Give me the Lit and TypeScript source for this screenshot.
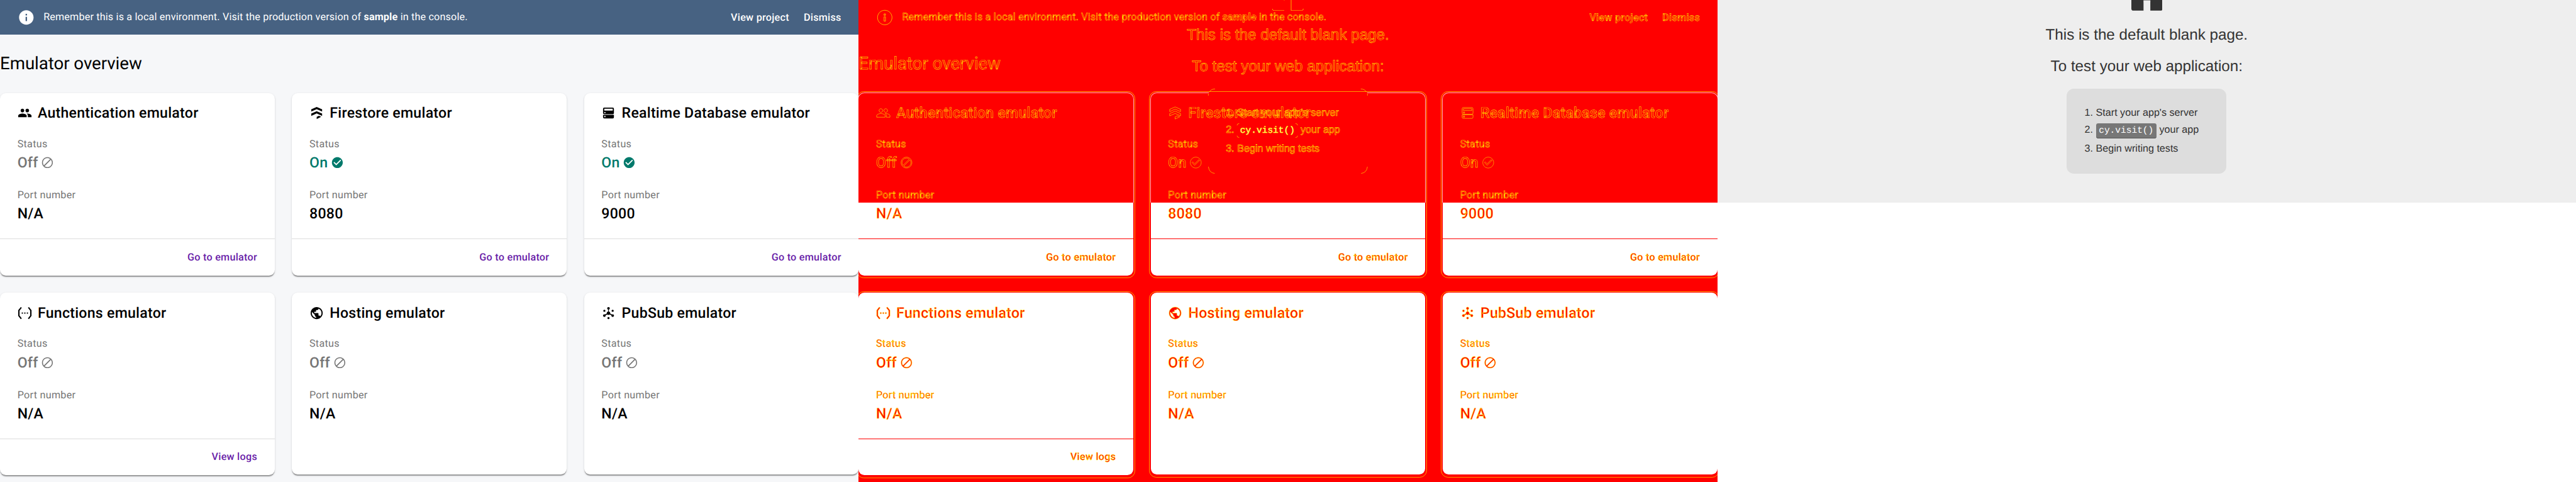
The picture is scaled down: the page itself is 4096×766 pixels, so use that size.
import { LitElement, html, css, svg, nothing } from "lit";
import { customElement, property } from "lit/decorators.js";
import { classMap } from "lit/directives/class-map.js";

const ICONS: Record<string, unknown> = {
  auth: svg`<path d="M16 11c1.66 0 2.99-1.34 2.99-3S17.66 5 16 5c-1.66 0-3 1.34-3 3s1.34 3 3 3zm-8 0c1.66 0 2.99-1.34 2.99-3S9.66 5 8 5C6.34 5 5 6.34 5 8s1.34 3 3 3zm0 2c-2.33 0-7 1.17-7 3.5V19h14v-2.5c0-2.33-4.67-3.5-7-3.5zm8 0c-.29 0-.62.02-.97.05 1.16.84 1.97 1.97 1.97 3.45V19h6v-2.5c0-2.33-4.67-3.5-7-3.5z"/>`,
  firestore: svg`<path d="M3 6l9-4 9 4v3.7l-9-4-9 4z"/><path d="M3 13l9-4 9 4v3.8l-9-4-9 4z"/><path d="M12 18.4l3.6-1.7 4 1.6L12 22z"/>`,
  database: svg`<path fill-rule="evenodd" d="M5 3h14a2 2 0 0 1 2 2v7.2a1.8 1.8 0 0 1-1.8 1.8H4.8A1.8 1.8 0 0 1 3 12.200V5a2 2 0 0 1 2-2zm0 2v3h14V5zm0 5.300v2h2v-2z"/><path fill-rule="evenodd" d="M3 15h18v4a2 2 0 0 1-2 2H5a2 2 0 0 1-2-2zm2 2v2h2v-2z"/>`,
  functions: svg`<path d="M5.200 2L7 3.200 3.200 8v8L7 20.800 5.200 22 1 16.700V7.300zM18.800 2L17 3.200 20.800 8v8L17 20.800l1.800 1.200L23 16.700V7.300z"/><circle cx="7.800" cy="12" r="1.200"/><circle cx="12" cy="12" r="1.200"/><circle cx="16.200" cy="12" r="1.200"/>`,
  hosting: svg`<path d="M12 2C6.48 2 2 6.48 2 12s4.48 10 10 10 10-4.48 10-10S17.52 2 12 2zm-1 17.93c-3.95-.49-7-3.85-7-7.93 0-.62.08-1.21.21-1.79L9 15v1c0 1.1.9 2 2 2v1.93zm6.9-2.54c-.26-.81-1-1.390-1.900-1.390h-1v-3c0-.55-.45-1-1-1H8v-2h2c.55 0 1-.45 1-1V7h2c1.100 0 2-.9 2-2v-.41c2.930 1.190 5 4.060 5 7.410 0 2.080-.8 3.970-2.100 5.390z"/>`,
  pubsub: svg`<path d="M11.500 4h1v7.500l7.200 3.900-.6 1.200L12 13.400l-7.100 3.200-.6-1.200 7.200-3.900z"/><circle cx="12" cy="4.200" r="2.200"/><circle cx="12" cy="12.200" r="2.800"/><circle cx="5.200" cy="16.200" r="2.200"/><circle cx="18.900" cy="16.200" r="2.200"/><circle cx="5.200" cy="8.200" r="1.800"/><circle cx="18.900" cy="8.200" r="1.800"/><circle cx="12" cy="20.200" r="1.800"/>`,
  off: svg`<path d="M12 2C6.48 2 2 6.48 2 12s4.48 10 10 10 10-4.48 10-10S17.52 2 12 2zM3.800 12c0-4.530 3.670-8.200 8.200-8.200 1.920 0 3.680.66 5.080 1.760L5.560 17.080A8.150 8.150 0 0 1 3.800 12zm8.200 8.200c-1.920 0-3.680-.66-5.080-1.760L18.440 6.920A8.150 8.150 0 0 1 20.200 12c0 4.530-3.670 8.200-8.200 8.200z"/>`,
  on: svg`<path d="M12 2C6.48 2 2 6.48 2 12s4.48 10 10 10 10-4.48 10-10S17.52 2 12 2zm-2 15l-5-5 1.410-1.410L10 14.170l7.590-7.590L19 8l-9 9z"/>`,
  info: svg`<path d="M12 2C6.48 2 2 6.48 2 12s4.48 10 10 10 10-4.48 10-10S17.52 2 12 2zm1 15h-2v-6h2v6zm0-8h-2V7h2v2z"/>`,
};

interface Emulator {
  icon: string;
  name: string;
  port?: string;
  action?: string;
}

const EMULATORS: Emulator[] = [
  { icon: "auth", name: "Authentication emulator", action: "Go to emulator" },
  { icon: "firestore", name: "Firestore emulator", port: "8080", action: "Go to emulator" },
  { icon: "database", name: "Realtime Database emulator", port: "9000", action: "Go to emulator" },
  { icon: "functions", name: "Functions emulator", action: "View logs" },
  { icon: "hosting", name: "Hosting emulator" },
  { icon: "pubsub", name: "PubSub emulator" },
];

const icon = (name: string, cls = "") =>
  html`<svg class="icon ${cls}" viewBox="0 0 24 24">${ICONS[name]}</svg>`;

/** The emulator overview page; `diff` paints it as a red/yellow change mask. */
@customElement("emulator-overview")
export class EmulatorOverview extends LitElement {
  @property({ type: Boolean, reflect: true }) diff = false;

  static styles = css`
    :host {
      display: flex;
      flex-direction: column;
      width: 1184px;
      height: 665px;
      background: #f6f7f9;
      color: #000;
      font-family: Roboto, sans-serif;
      letter-spacing: 0.25px;
      white-space: nowrap;
      text-rendering: geometricPrecision;
    }
    .icon {
      width: 20px;
      height: 20px;
      flex: none;
      fill: currentColor;
      overflow: visible;
    }
    .banner {
      display: flex;
      align-items: center;
      height: 48px;
      padding: 0 24px;
      background: #476282;
      color: #fff;
      font-size: 14px;
      line-height: 20px;
    }
    .icon.info {
      width: 24px;
      height: 24px;
      margin-right: 12px;
    }
    .message {
      flex: 1;
      margin-bottom: 2.200px;
      letter-spacing: 0.16px;
    }
    .message b {
      font-weight: 700;
    }
    .links {
      display: flex;
      gap: 20px;
      font-weight: 500;
    }
    h1 {
      margin: 0;
      padding: 24.300px 0 23.700px;
      font-size: 24px;
      line-height: 32px;
      font-weight: 400;
      letter-spacing: -0.04px;
    }
    .grid {
      display: grid;
      grid-template-columns: repeat(3, 1fr);
      grid-template-rows: 251.500px 251.500px;
      gap: 24px;
    }
    .card {
      position: relative;
      display: flex;
      flex-direction: column;
      border-radius: 8px;
      background: #fff;
      box-shadow: 0 2px 1px -1px rgba(0, 0, 0, 0.2), 0 1px 1px rgba(0, 0, 0, 0.14),
        0 1px 3px rgba(0, 0, 0, 0.12);
    }
    .card.plain {
      margin-bottom: 0.800px;
    }
    .body {
      flex: 1;
      padding: 16.100px 24px 0;
    }
    .title {
      display: flex;
      align-items: center;
      gap: 8px;
      margin-bottom: 19.800px;
      font-size: 20px;
      line-height: 24px;
      font-weight: 500;
    }
    .label {
      font-size: 14px;
      line-height: 20px;
      color: #757575;
    }
    .value {
      display: flex;
      align-items: center;
      gap: 4px;
      margin: 4.600px 0 21.800px;
      font-size: 20px;
      line-height: 24px;
      font-weight: 500;
    }
    .value .icon {
      width: 18px;
      height: 18px;
    }
    .value.off {
      color: #757575;
    }
    .value.on {
      color: #00796b;
    }
    .actions {
      display: flex;
      justify-content: flex-end;
      align-items: center;
      height: 52px;
      padding: 0 24px;
      border-top: 1px solid #dcdcdc;
      font-size: 14px;
      line-height: 20px;
      font-weight: 500;
      color: #681da8;
    }
    .actions span {
      margin-bottom: 0.800px;
    }

    :host([diff]) {
      background: #f00;
      color: #f00;
      -webkit-text-stroke: 0.400px #ff0;
    }
    :host([diff]) .icon {
      stroke: #ff0;
      stroke-width: 0.600px;
    }
    :host([diff]) .banner {
      background: none;
    }
    :host([diff]) .banner,
    :host([diff]) .label,
    :host([diff]) .value,
    :host([diff]) .actions {
      color: #f00;
    }
    :host([diff]) .card {
      box-shadow: none;
    }
    :host([diff]) .card.covered {
      background: linear-gradient(#f00 151.200px, #fff 151.200px);
    }
    :host([diff]) .actions {
      border-top-color: #f00;
    }
    .outline {
      position: absolute;
      inset: -2px -2.600px -3.700px;
      border: 1px solid rgba(255, 255, 0, 0.6);
      border-radius: 10px;
    }
    .edge {
      position: absolute;
      inset: -0.600px -1px auto;
      height: 151px;
      border: 1px solid rgba(255, 255, 255, 0.7);
      border-bottom: 0;
      border-radius: 9px 9px 0 0;
    }
  `;

  private card(e: Emulator, index: number) {
    const covered = index < 3;
    return html`<article class=${classMap({ card: true, plain: !e.action, covered })}>
      ${this.diff ? html`<i class="outline"></i>${covered ? html`<i class="edge"></i>` : nothing}` : nothing}
      <div class="body">
        <div class="title">${icon(e.icon)}<span>${e.name}</span></div>
        <div class="label">Status</div>
        <div class="value ${e.port ? "on" : "off"}">
          <span>${e.port ? "On" : "Off"}</span>${icon(e.port ? "on" : "off")}
        </div>
        <div class="label">Port number</div>
        <div class="value">${e.port ?? "N/A"}</div>
      </div>
      ${e.action ? html`<div class="actions"><span>${e.action}</span></div>` : nothing}
    </article>`;
  }

  render() {
    return html`
      <header class="banner">
        ${icon("info", "info")}
        <span class="message">Remember this is a local environment. Visit the production version of <b>sample</b> in the console.</span>
        <nav class="links"><span>View project</span><span>Dismiss</span></nav>
      </header>
      <h1>Emulator overview</h1>
      <main class="grid">${EMULATORS.map((e, i) => this.card(e, i))}</main>
    `;
  }
}

/** The test runner's default blank page; `diff` leaves only its outlines. */
@customElement("blank-page")
export class BlankPage extends LitElement {
  @property({ type: Boolean, reflect: true }) diff = false;

  static styles = css`
    :host {
      display: flex;
      flex-direction: column;
      align-items: center;
      width: 1184px;
      height: 279px;
      overflow: hidden;
      background: #eee;
      color: #333;
      font-family: "Liberation Sans", Arial, sans-serif;
      white-space: nowrap;
      text-rendering: geometricPrecision;
    }
    .logo {
      display: block;
      width: 43px;
      height: 15px;
      margin-bottom: 11.600px;
    }
    p {
      margin: 0;
      font-size: 21px;
      line-height: 44px;
    }
    .box {
      position: relative;
      box-sizing: border-box;
      width: 220px;
      height: 117px;
      margin-top: 7.400px;
      padding: 21.600px 0 0 24.300px;
      border-radius: 10px;
      background: #ddd;
      font-size: 14px;
      line-height: 24px;
    }
    .step {
      display: flex;
      height: 26px;
    }
    .step:first-child {
      height: 23.500px;
    }
    .num {
      width: 15.700px;
    }
    code {
      position: relative;
      padding: 3.500px 4px 2.500px;
      border-bottom: 1px solid #555;
      border-radius: 3px;
      background: #777;
      color: #fff;
      font-family: "Liberation Mono", monospace;
      font-size: 12.600px;
    }
    .corners {
      position: absolute;
      left: 0;
      top: 0;
      width: 100%;
      height: 100%;
      overflow: visible;
      fill: none;
      stroke: #ff0;
      stroke-width: 0.500px;
    }
    :host([diff]) {
      background: none;
      color: #f00;
      -webkit-text-stroke: 0.420px #ff0;
    }
    :host([diff]) .box {
      background: linear-gradient(#f00, #f00) 0 5px / 100% 2px no-repeat;
    }
    :host([diff]) code {
      background: none;
      border-color: transparent;
      color: #ffa;
    }
  `;

  private logo() {
    return this.diff
      ? svg`<path fill="none" stroke="#ff0" stroke-width=".6" d="M.3 12.200c0 1.500.8 2.400 2.200 2.400H16.500M26 0V14.600H40.500c1.400 0 2.200-.9 2.200-2.600M16.500 0v.5"/>`
      : svg`<path fill="#bbb" d="M0 3h16.800v12H3a3 3 0 0 1-3-3zM26 3h17v9a3 3 0 0 1-3 3H26z"/><path fill="#333" d="M0 0h43v11.600a3 3 0 0 1-3 3H26.200V.5H16.700v14.100H3a3 3 0 0 1-3-3z"/>`;
  }

  render() {
    return html`
      <svg class="logo" viewBox="0 0 43 15">${this.logo()}</svg>
      <p>This is the default blank page.</p>
      <p>To test your web application:</p>
      <div class="box">
        <div class="step"><span class="num">1.</span><span>Start your app's server</span></div>
        <div class="step">
          <span class="num">2.</span>
          <span><code>cy.visit()${this.diff
            ? html`<svg class="corners" viewBox="0 0 83.600 21.300" preserveAspectRatio="none"><path d="M0 3Q0 .3 3 .3M80.600 .3Q83.600 .3 83.600 3M0 18.300Q0 21 3 21M80.600 21Q83.600 21 83.600 18.300"/></svg>`
            : nothing}</code> your app</span>
        </div>
        <div class="step"><span class="num">3.</span><span>Begin writing tests</span></div>
        ${this.diff
          ? html`<svg class="corners" viewBox="0 0 220 117"><path d="M.3 9.500V7M1.800 4.500Q4 .4 9.500 .3M210.500 .3Q216 .4 218.200 4.500M219.700 7V9.500M.3 107.500Q1.500 116 9 116.700M211 116.700Q218.500 116 219.700 107.500"/></svg>`
          : nothing}
      </div>
    `;
  }
}

@customElement("app-root")
export class AppRoot extends LitElement {
  static styles = css`
    :host {
      display: block;
      width: 4096px;
      height: 766px;
      overflow: hidden;
      background: #fff;
    }
    .sheet {
      display: grid;
      grid-template-columns: repeat(3, 1184px);
      width: 3552px;
      height: 665px;
      zoom: 1.1531532;
    }
    .pane {
      position: relative;
      overflow: hidden;
      background: #fff;
    }
    .over {
      position: absolute;
      left: 0;
      top: 0;
    }
  `;

  render() {
    return html`<div class="sheet">
      <section class="pane"><emulator-overview></emulator-overview></section>
      <section class="pane">
        <emulator-overview diff></emulator-overview>
        <blank-page class="over" diff></blank-page>
      </section>
      <section class="pane"><blank-page></blank-page></section>
    </div>`;
  }
}
